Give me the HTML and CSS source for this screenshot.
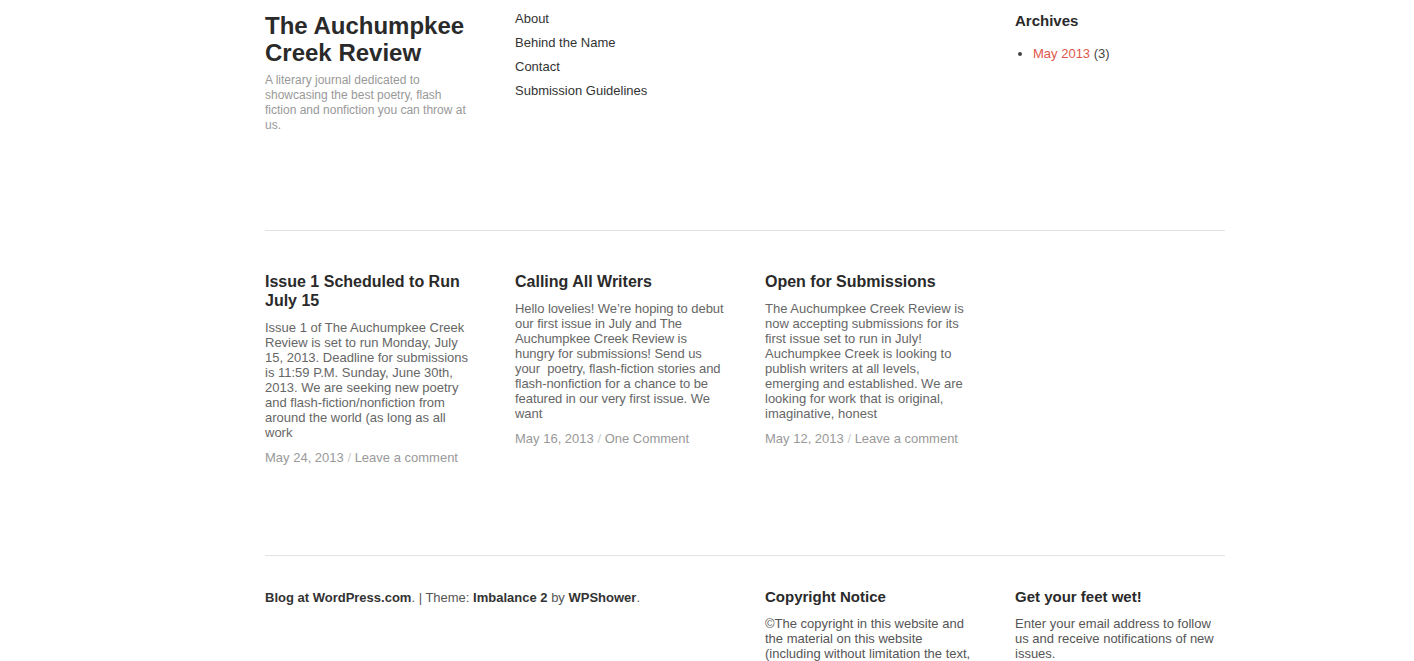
FILE: index.html
```html
<!DOCTYPE html>
<html lang="en">
<head>
  <meta charset="UTF-8" />
  <meta name="viewport" content="width=device-width, initial-scale=1.0"/>
  <title>The Auchumpkee Creek Review</title>
  <link rel="stylesheet" href="styles.css">
</head>
<body>
  <div class="wrap">
    <header class="header">
      <div class="col">
        <h1 class="site-title">The Auchumpkee Creek Review</h1>
        <p class="tagline">A literary journal dedicated to showcasing the best poetry, flash fiction and nonfiction you can throw at us.</p>
      </div>
      <div class="col">
        <ul class="menu">
          <li><a href="#">About</a></li>
          <li><a href="#">Behind the Name</a></li>
          <li><a href="#">Contact</a></li>
          <li><a href="#">Submission Guidelines</a></li>
        </ul>
      </div>
      <div class="col"></div>
      <div class="col">
        <h3 class="widget-title">Archives</h3>
        <ul class="archives">
          <li><a href="#">May 2013</a> (3)</li>
        </ul>
      </div>
    </header>

    <section class="posts">
      <article class="col post">
        <h2>Issue 1 Scheduled to Run July 15</h2>
        <p>Issue 1 of The Auchumpkee Creek Review is set to run Monday, July 15, 2013. Deadline for submissions is 11:59 P.M. Sunday, June 30th, 2013. We are seeking new poetry and flash-fiction/nonfiction from around the world (as long as all work</p>
        <div class="meta">May 24, 2013 <span class="sep">/</span> <a href="#">Leave a comment</a></div>
      </article>
      <article class="col post">
        <h2>Calling All Writers</h2>
        <p class="tight">Hello lovelies! We&rsquo;re hoping to debut our first issue in July and The Auchumpkee Creek Review is hungry for submissions! Send us your&nbsp; poetry, flash-fiction stories and flash-nonfiction for a chance to be featured in our very first issue. We want</p>
        <div class="meta">May 16, 2013 <span class="sep">/</span> <a href="#">One Comment</a></div>
      </article>
      <article class="col post">
        <h2>Open for Submissions</h2>
        <p>The Auchumpkee Creek Review is now accepting submissions for its first issue set to run in July! Auchumpkee Creek is looking to publish writers at all levels, emerging and established. We are looking for work that is original, imaginative, honest</p>
        <div class="meta">May 12, 2013 <span class="sep">/</span> <a href="#">Leave a comment</a></div>
      </article>
    </section>

    <footer class="footer">
      <div class="col credits">
        <p><a href="#">Blog at WordPress.com</a>. | Theme: <a href="#">Imbalance 2</a> by <a href="#">WPShower</a>.</p>
      </div>
      <div class="col"></div>
      <div class="col">
        <h3 class="widget-title">Copyright Notice</h3>
        <p>&copy;The copyright in this website and the material on this website (including without limitation the text,</p>
      </div>
      <div class="col">
        <h3 class="widget-title">Get your feet wet!</h3>
        <p>Enter your email address to follow us and receive notifications of new issues.</p>
      </div>
    </footer>
  </div>
</body>
</html>
```

FILE: styles.css
```css
body {
  margin: 0;
  padding: 0;
  background: #fff;
  color: #555;
  font-family: "Liberation Sans", Arial, sans-serif;
  font-size: 13px;
  line-height: 15px;
}
a {
  text-decoration: none;
}
p {
  margin: 0;
}
.wrap {
  width: 960px;
  margin-left: 265px;
}
.col {
  width: 210px;
}
.header, .posts, .footer {
  display: grid;
  grid-template-columns: repeat(4, 210px);
  column-gap: 40px;
}
.header {
  height: 231px;
  box-sizing: border-box;
  border-bottom: 1px solid #e2e2e2;
}
.site-title {
  margin: 12px 0 7px;
  font-size: 24px;
  line-height: 27px;
  color: #2a2a2a;
}
.tagline {
  font-size: 12px;
  line-height: 15px;
  color: #999;
}
.menu {
  list-style: none;
  margin: 7px 0 0;
  padding: 0;
}
.menu li {
  line-height: 24px;
}
.menu a {
  color: #333;
}
.widget-title {
  margin: 12px 0 16px;
  font-size: 15px;
  line-height: 18px;
  color: #2a2a2a;
}
.archives {
  margin: 0;
  padding-left: 18px;
  color: #444;
}
.archives a {
  color: #e0574b;
}
.posts {
  padding: 41px 0 90px;
  border-bottom: 1px solid #e2e2e2;
}
.post h2 {
  margin: 0 0 10px;
  font-size: 16px;
  line-height: 19px;
  color: #2a2a2a;
}
.post p {
  color: #666;
}
.post .tight {
  letter-spacing: -0.06px;
}
.meta {
  margin-top: 10px;
  color: #999;
}
.meta a {
  color: #999;
}
.meta .sep {
  color: #ccc;
}
.footer {
  padding-top: 20px;
}
.footer .widget-title {
  margin-bottom: 10px;
}
.footer p {
  color: #555;
}
.credits {
  width: 460px;
  padding-top: 14px;
}
.credits p {
  white-space: nowrap;
}
.credits a {
  color: #333;
  font-weight: bold;
}
```
